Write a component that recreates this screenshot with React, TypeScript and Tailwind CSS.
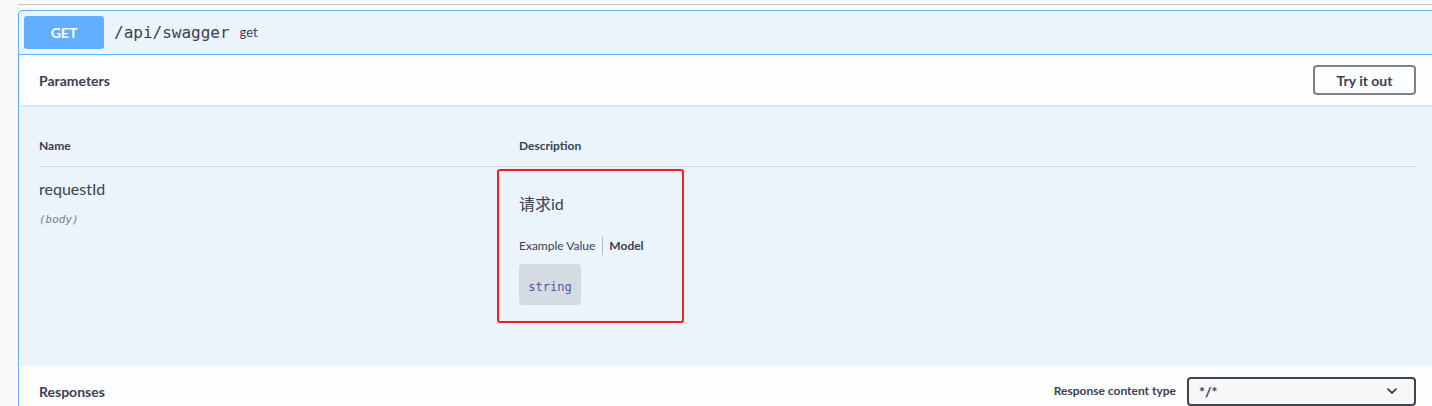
import React from "react";

export default function App() {
  return (
    <div className="relative h-[406px] w-[1432px] overflow-hidden bg-[#fafafa] font-['Lato','Noto_Sans_CJK_SC',sans-serif] text-[#3b4151]">
      <div className="ml-[18px] pt-[4px]">
        <div className="h-px bg-[#c8c8c8]" />
      </div>
      <div className="ml-[18px] mt-[5px] w-[1419px] rounded-[4px] border border-[#61affe] bg-[#ebf3fb]">
        {/* summary */}
        <div className="flex h-[44px] items-center border-b border-[#61affe] px-[5px]">
          <div className="flex h-[33px] w-[80px] items-center justify-center rounded-[3px] bg-[#61affe] text-[14px] font-bold text-white">
            GET
          </div>
          <div className="ml-[10px] font-['DejaVu_Sans_Mono',monospace] text-[16px] text-[#3b4151]">
            /api/swagger
          </div>
          <div className="ml-[10px] text-[13px] text-[#3b4151]">get</div>
        </div>
        {/* parameters header */}
        <div className="flex h-[50px] items-center justify-between bg-[#fcfdfe] px-[20px] shadow-[0_1px_2px_rgba(0,0,0,0.1)]">
          <div className="text-[14px] font-bold">Parameters</div>
          <button className="flex h-[30px] w-[103px] items-center justify-center rounded-[4px] border-2 border-[#808080] bg-transparent text-[14px] font-bold text-[#3b4151]">
            Try it out
          </button>
        </div>
        {/* body */}
        <div className="h-[261px] px-[20px] pt-[21px]">
          <div className="flex border-b border-[#d1d7e0] py-[12px] text-[12px] font-bold leading-[16px]">
            <div className="w-[480px]">Name</div>
            <div>Description</div>
          </div>
          <div className="flex pt-[10px]">
            <div className="w-[480px]">
              <div className="text-[16px] leading-[24px]">requestId</div>
              <div className="mt-[11px] font-['DejaVu_Sans_Mono',monospace] text-[11px] italic leading-[16px] text-[#808080]">
                (body)
              </div>
            </div>
            <div>
              <div className="mt-[15px] text-[16px] leading-[24px]">请求id</div>
              <div className="mt-[21px] flex items-center text-[12px] leading-[16px]">
                <span className="pr-[7px]">Example Value</span>
                <span className="h-[18px] w-px bg-[#b5bac3]" />
                <span className="pl-[6px] font-bold">Model</span>
              </div>
              <div className="mt-[9px] flex h-[41px] w-[62px] items-center justify-center rounded-[4px] bg-[#d5dbe3] pt-[4px] font-['DejaVu_Sans_Mono',monospace] text-[12px] text-[#55a]">
                string
              </div>
            </div>
          </div>
        </div>
        {/* responses header */}
        <div className="flex h-[50px] items-center justify-between bg-[#fcfdfe] px-[20px]">
          <div className="text-[14px] font-bold">Responses</div>
          <div className="flex items-center">
            <span className="mr-[11px] text-[12px] font-bold">Response content type</span>
            <div className="flex h-[29px] w-[229px] items-center justify-between rounded-[4px] border-2 border-[#41444e] bg-[#f7f7f7] pl-[10px] pr-[17px]">
              <span className="text-[14px] font-bold">*/*</span>
              <svg width="10" height="6" viewBox="0 0 10 6" fill="none">
                <path d="M1 1L5 5L9 1" stroke="#222" strokeWidth="1.6" strokeLinecap="round" strokeLinejoin="round" />
              </svg>
            </div>
          </div>
        </div>
      </div>
      {/* annotation */}
      <div className="absolute left-[497px] top-[169px] h-[154px] w-[187px] rounded-[3px] border-2 border-[#f3201c]" />
    </div>
  );
}
